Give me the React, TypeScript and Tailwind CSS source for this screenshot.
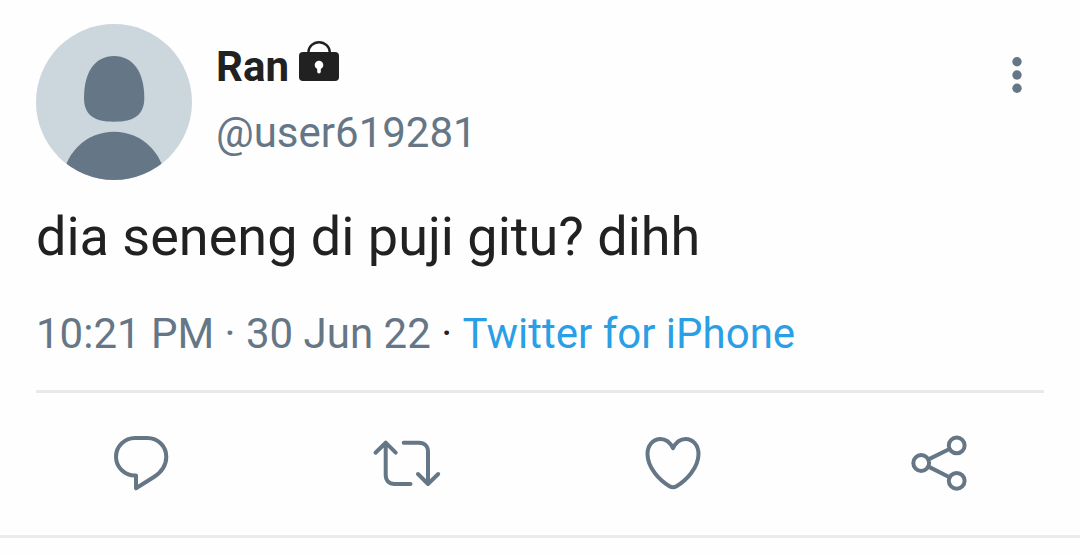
import React from "react";

function Avatar() {
  return (
    <svg viewBox="0 0 156 156" className="w-39 h-39 shrink-0 rounded-full bg-[#ccd6dd]" aria-hidden="true">
      <path
        fill="#657786"
        d="M78 32C59 32 48 48 48 74C48 91 58 97.7 78 97.7S108.3 91 108.3 74C108.3 48 97 32 78 32Z"
      />
      <circle cx="78" cy="159" r="51.3" fill="#657786" />
    </svg>
  );
}

function LockIcon() {
  return (
    <svg viewBox="0 0 40 40" className="w-10 h-10" aria-hidden="true">
      <path d="M9.4 13V11.5C9.4 5.8 14.2 1.2 20 1.2S30.8 5.8 30.8 11.5V13" fill="none" stroke="#212121" strokeWidth="2.4" />
      <rect y="11" width="40" height="29" rx="4" fill="#212121" />
      <circle cx="20" cy="24" r="4.3" fill="#fff" />
      <path d="M18.2 26h3.6v4.8a1.8 1.8 0 0 1-3.6 0z" fill="#fff" />
    </svg>
  );
}

interface ActionProps {
  label: string;
  children: React.ReactNode;
}

function Action({ label, children }: ActionProps) {
  return (
    <button type="button" aria-label={label} className="justify-self-center rounded-full">
      <svg
        viewBox="0 0 72 72"
        className="w-18 h-18"
        fill="none"
        stroke="currentColor"
        strokeWidth="4"
        strokeLinecap="round"
        strokeLinejoin="round"
      >
        {children}
      </svg>
    </button>
  );
}

export default function App() {
  return (
    <main className="min-h-screen bg-[#fefefe] font-['Roboto',sans-serif] text-[42px] text-[#657786]">
      <article className="border-b-3 border-[#ebebeb]">
        <div className="px-9 pt-6">
          <header className="flex items-start">
            <Avatar />
            <div className="flex-1 pl-6 pt-2.5 leading-[66px]">
              <h1 className="flex items-baseline gap-2.5 font-bold text-[#212121]">
                Ran
                <LockIcon />
              </h1>
              <p>@user619281</p>
            </div>
            <button type="button" aria-label="More" className="pt-7 pr-5">
              <svg viewBox="0 0 14 46" className="w-3.5 h-[46px]" fill="currentColor">
                <circle cx="7" cy="9.7" r="4.7" />
                <circle cx="7" cy="23" r="4.7" />
                <circle cx="7" cy="36.3" r="4.7" />
              </svg>
            </button>
          </header>

          <p className="mt-6 text-[54px] leading-[66px] text-[#212121]">dia seneng di puji gitu? dihh</p>

          <p className="mt-10 pb-8 border-b-3 border-[#e9e9e9] leading-12">
            10:21 PM · 30 Jun 22 <span className="text-[#212121]">·</span>{" "}
            <a href="#" className="inline-block text-[#2b9fe6]">Twitter for iPhone</a>
          </p>
        </div>

        <div className="grid grid-cols-4 px-2 pt-[34px] pb-9">
          <Action label="Reply">
            <path d="M31 48.5H30C19.5 48.5 11 40 11 29.7S19.5 11 30 11H42.5C53 11 61.3 19.5 61.3 29.7C61.3 39.5 56 45.5 48.5 50.3L31 61.3Z" />
          </Action>
          <Action label="Retweet">
            <path d="M4.5 25.7L14.7 15.7L24.7 25.7M14.7 16V48C14.7 53.5 18 57 23.5 57H39.5" />
            <path d="M32.7 15.7H48C53.5 15.7 57 19.2 57 24.7V56.5M47 47L57 57L67.2 47" />
          </Action>
          <Action label="Like">
            <path d="M36 21.2C33 15.2 28.5 12 23.5 12C16 12 10.5 18.5 10.5 27C10.5 41 23 53.5 32.5 59.2Q36 61.2 39.5 59.2C49 53.5 61.5 41 61.5 27C61.5 18.5 56 12 48.5 12C43.5 12 39 15.2 36 21.2Z" />
          </Action>
          <Action label="Share">
            <circle cx="18.2" cy="36" r="7.9" />
            <circle cx="53.7" cy="18.4" r="7.9" />
            <circle cx="53.7" cy="53.8" r="7.9" />
            <path d="M25.5 32.4L46.5 22M25.5 39.6L46.5 50.2" />
          </Action>
        </div>
      </article>
    </main>
  );
}
